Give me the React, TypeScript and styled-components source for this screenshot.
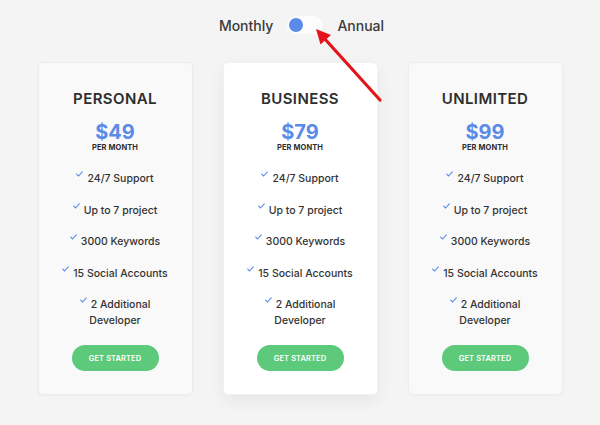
import React from "react";
import styled, { createGlobalStyle } from "styled-components";

interface Plan {
  name: string;
  price: number;
  featured?: boolean;
}

const plans: Plan[] = [
  { name: "PERSONAL", price: 49 },
  { name: "BUSINESS", price: 79, featured: true },
  { name: "UNLIMITED", price: 99 },
];

const features = [
  "24/7 Support",
  "Up to 7 project",
  "3000 Keywords",
  "15 Social Accounts",
  "2 Additional Developer",
];

const GlobalStyle = createGlobalStyle`
  html, body {
    margin: 0;
    padding: 0;
    background: #f4f4f4;
  }
  body {
    font-family: Inter, "Liberation Sans", sans-serif;
    color: #333;
  }
`;

const Page = styled.div`
  position: relative;
  width: 600px;
  height: 425px;
  display: flex;
  flex-direction: column;
  align-items: center;
  overflow: hidden;
`;

const ToggleRow = styled.div`
  display: flex;
  align-items: center;
  gap: 14px;
  margin-top: 16px;
  margin-left: 3px;
  height: 18px;
`;

const ToggleLabel = styled.span`
  font-size: 14px;
  font-weight: 500;
  color: #3a3a3a;
`;

const Track = styled.div`
  width: 36px;
  height: 18px;
  border-radius: 9px;
  background: #fcfcfc;
  display: flex;
  align-items: center;
  padding: 0 2px;
  box-sizing: border-box;
`;

const Knob = styled.div`
  width: 14px;
  height: 14px;
  border-radius: 50%;
  background: #5b8be8;
`;

const Cards = styled.div`
  display: flex;
  gap: 30px;
  margin-top: 28px;
`;

const Card = styled.div<{ $featured?: boolean }>`
  width: 155px;
  height: 333px;
  box-sizing: border-box;
  border-radius: 5px;
  background: ${(p) => (p.$featured ? "#ffffff" : "#f9f9f9")};
  border: 1px solid ${(p) => (p.$featured ? "#f2f2f2" : "#ececec")};
  box-shadow: ${(p) =>
    p.$featured ? "0 6px 16px rgba(0,0,0,0.06)" : "0 1px 3px rgba(0,0,0,0.03)"};
  display: flex;
  flex-direction: column;
  align-items: center;
  padding: 26px 20px 0;
`;

const PlanName = styled.h2`
  margin: 0;
  font-size: 15px;
  font-weight: 600;
  letter-spacing: 0.4px;
  color: #2e2e2e;
  line-height: 20px;
`;

const Price = styled.div`
  margin-top: 11px;
  font-size: 20px;
  font-weight: 700;
  color: #5b8be8;
  line-height: 24px;
`;

const Period = styled.div`
  margin-top: -1px;
  font-size: 7.5px;
  font-weight: 700;
  color: #2e2e2e;
  letter-spacing: 0.1px;
`;

const FeatureList = styled.ul`
  list-style: none;
  margin: 19px 0 0;
  padding: 0;
  width: 112px;
  display: flex;
  flex-direction: column;
  gap: 15.5px;
`;

const Feature = styled.li`
  text-align: center;
  font-size: 10.5px;
  font-weight: 500;
  line-height: 16px;
  color: #333;
`;

const Check = styled.svg`
  width: 7px;
  height: 6px;
  margin-right: 4px;
  vertical-align: 5px;
`;

const Button = styled.button`
  margin-top: 16px;
  width: 87px;
  height: 26px;
  border: none;
  border-radius: 13px;
  background: #5cc97b;
  color: #fff;
  font-family: inherit;
  font-size: 7.5px;
  font-weight: 600;
  letter-spacing: 0.1px;
  cursor: pointer;
`;

const Annotation = styled.svg`
  position: absolute;
  left: 0;
  top: 0;
  width: 600px;
  height: 425px;
  pointer-events: none;
`;

export default function App() {
  return (
    <>
      <GlobalStyle />
      <Page>
        <ToggleRow>
          <ToggleLabel>Monthly</ToggleLabel>
          <Track>
            <Knob />
          </Track>
          <ToggleLabel>Annual</ToggleLabel>
        </ToggleRow>
        <Cards>
          {plans.map((plan) => (
            <Card key={plan.name} $featured={plan.featured}>
              <PlanName>{plan.name}</PlanName>
              <Price>${plan.price}</Price>
              <Period>PER MONTH</Period>
              <FeatureList>
                {features.map((f) => (
                  <Feature key={f}>
                    <Check viewBox="0 0 7 6">
                      <path
                        d="M0.7 3.2 L2.6 5 L6.3 0.8"
                        fill="none"
                        stroke="#5b8be8"
                        strokeWidth="1.1"
                        strokeLinecap="round"
                        strokeLinejoin="round"
                      />
                    </Check>
                    {f}
                  </Feature>
                ))}
              </FeatureList>
              <Button>GET STARTED</Button>
            </Card>
          ))}
        </Cards>
        <Annotation viewBox="0 0 600 425">
          <line
            x1="380"
            y1="100"
            x2="324"
            y2="38"
            stroke="#e3151b"
            strokeWidth="3.2"
            strokeLinecap="round"
          />
          <polygon points="316,29 331,35 320.5,44.5" fill="#e3151b" />
        </Annotation>
      </Page>
    </>
  );
}
